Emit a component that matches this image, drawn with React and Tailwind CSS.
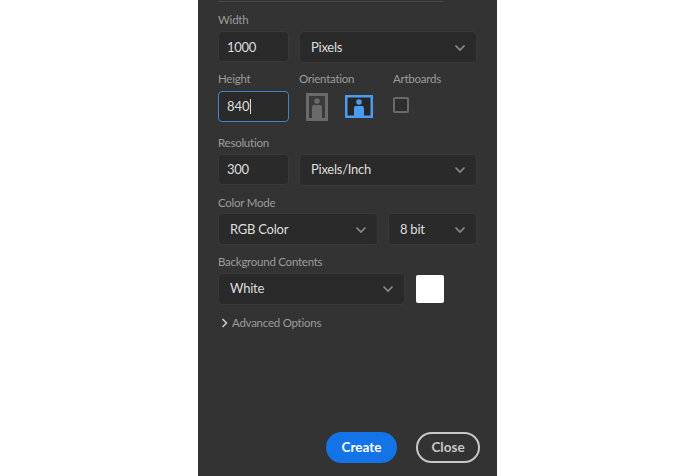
import React from 'react';

function Chevron() {
  return (
    <svg width="12" height="8" viewBox="0 0 12 8" fill="none" stroke="#8c8c8c" strokeWidth="1.6" className="shrink-0">
      <path d="M1.5 1.5 L6 6 L10.5 1.5" />
    </svg>
  );
}

function Label({ children, className = '' }) {
  return <div className={`h-[18px] text-[11.5px] tracking-[-0.25px] leading-[18px] text-[#9c9c9c] ${className}`}>{children}</div>;
}

function Field({ children, className = '' }) {
  return (
    <div className={`h-[31px] bg-[#2a2a2a] border border-[#393939] rounded-[4px] flex items-center pl-[8px] text-[13px] tracking-[-0.3px] text-[#dedede] ${className}`}>
      {children}
    </div>
  );
}

function Select({ children, className = '' }) {
  return (
    <div className={`h-[32px] bg-[#2a2a2a] border border-[#393939] rounded-[4px] flex items-center justify-between pl-[11px] pr-[10px] text-[13px] tracking-[-0.25px] text-[#dedede] ${className}`}>
      <span>{children}</span>
      <Chevron />
    </div>
  );
}

function Portrait() {
  return (
    <svg width="22" height="28" viewBox="0 0 22 28">
      <rect x="1.5" y="1.5" width="19" height="25" fill="#3a3a3a" stroke="#6a6a6a" strokeWidth="3" />
      <circle cx="11" cy="8" r="2.8" fill="#6a6a6a" />
      <path d="M6 14 Q6 12 8 12 H14 Q16 12 16 14 V25 H6 Z" fill="#6a6a6a" />
    </svg>
  );
}

function Landscape() {
  return (
    <svg width="28" height="23" viewBox="0 0 28 23">
      <rect x="1.25" y="1.25" width="25.5" height="20.5" fill="#262626" stroke="#4a9cf0" strokeWidth="2.5" />
      <circle cx="14" cy="7" r="2.8" fill="#4a9cf0" />
      <path d="M9 13 Q9 11 11 11 H17 Q19 11 19 13 V21 H9 Z" fill="#4a9cf0" />
    </svg>
  );
}

export default function App() {
  return (
    <div className="h-[476px] w-[700px] bg-white overflow-hidden font-['Lato',sans-serif]">
      <div className="ml-[198px] w-[299px] h-full bg-[#333333] pl-[20px] pr-[20px] flex flex-col">
        <div className="h-px w-[225px] mt-px bg-[#484848]" />

        <Label className="mt-[9px]">Width</Label>
        <div className="flex gap-[10px] mt-[2px]">
          <Field className="w-[71px] pt-[2px]">1000</Field>
          <Select className="w-[178px] pt-[2px]">Pixels</Select>
        </div>

        <div className="flex mt-[7px]">
          <div className="w-[81px]">
            <Label>Height</Label>
            <div className="mt-[3px] w-[71px] h-[31px] bg-[#2a2a2a] border-[1.5px] border-[#3f86c8] rounded-[4px] flex items-center pl-[8px] text-[13px] text-[#dedede]">
              840<span className="w-px h-[15px] bg-[#dedede]" />
            </div>
          </div>
          <div className="w-[94px]">
            <Label>Orientation</Label>
            <div className="flex items-center gap-[17px] mt-[3px] pl-[7px] h-[31px]">
              <Portrait />
              <Landscape />
            </div>
          </div>
          <div>
            <Label>Artboards</Label>
            <div className="mt-[3px] h-[31px] flex items-center">
              <div className="w-[16px] h-[16px] border-2 border-[#6a6a6a] rounded-[2px] -mt-[4px] bg-[#2e2e2e]" />
            </div>
          </div>
        </div>

        <Label className="mt-[12px]">Resolution</Label>
        <div className="flex gap-[10px] mt-[2px]">
          <Field className="w-[71px]">300</Field>
          <Select className="w-[178px]">Pixels/Inch</Select>
        </div>

        <Label className="mt-[8px]">Color Mode</Label>
        <div className="flex gap-[10px] mt-[1px]">
          <Select className="w-[160px] pt-[2px]">RGB Color</Select>
          <Select className="w-[89px] pt-[2px]">8 bit</Select>
        </div>

        <Label className="mt-[8px]">Background Contents</Label>
        <div className="flex items-center gap-[11px] mt-[2px]">
          <Select className="w-[187px]">White</Select>
          <div className="w-[28px] h-[28px] bg-white rounded-[2px]" />
        </div>

        <div className="flex items-center gap-[4px] mt-[9px] pl-[3px] h-[18px] text-[11.5px] tracking-[-0.25px] text-[#9c9c9c]">
          <svg width="7" height="10" viewBox="0 0 7 10" fill="none" stroke="#c8c8c8" strokeWidth="1.6">
            <path d="M1.5 1 L5.5 5 L1.5 9" />
          </svg>
          Advanced Options
        </div>

        <div className="flex items-center mt-auto mb-[13px] ml-[108px] -mr-[3px]">
          <div className="w-[71px] h-[31px] rounded-full bg-[#1473e6] flex items-center justify-center text-[13.5px] font-bold text-white">Create</div>
          <div className="ml-[19px] w-[64px] h-[31px] rounded-full border-2 border-[#c8c8c8] flex items-center justify-center text-[13.5px] font-bold text-[#c8c8c8]">Close</div>
        </div>
      </div>
    </div>
  );
}
